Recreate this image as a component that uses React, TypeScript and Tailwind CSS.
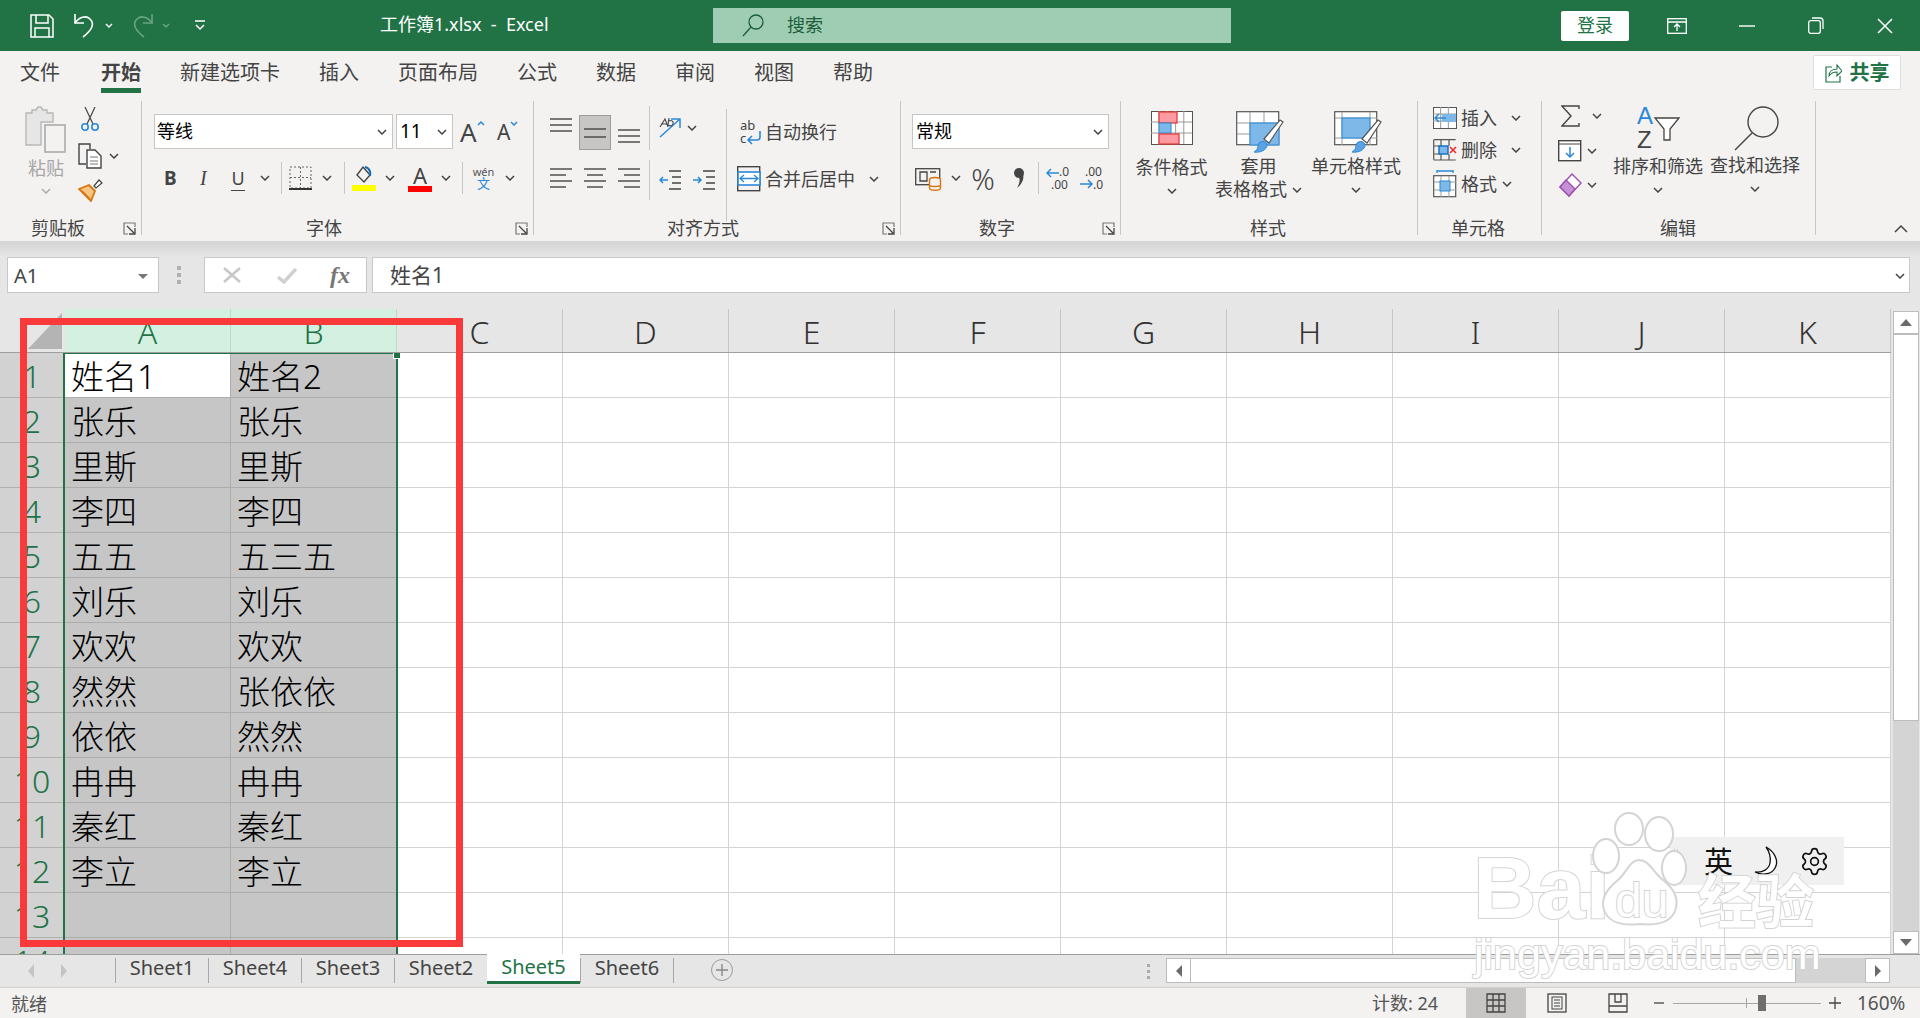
import type { ReactNode } from "react"
import { Settings } from "lucide-react"

type SvgProps = { w: number; h: number; children: ReactNode; className?: string }

function Svg({ w, h, children, className }: SvgProps) {
  return (
    <svg width={w} height={h} viewBox={`0 0 ${w} ${h}`} fill="none" className={`shrink-0 ${className ?? ""}`}>
      {children}
    </svg>
  )
}

function Chev({ className = "" }: { className?: string }) {
  return (
    <Svg w={10} h={6} className={className}>
      <path d="M1 1l4 4 4-4" stroke="#444" strokeWidth="1.5" />
    </Svg>
  )
}

function Launcher() {
  return (
    <Svg w={13} h={13} className="ml-auto mr-[5px] mt-[1px]">
      <path d="M12 5V1H1v11h4" stroke="#777" strokeWidth="1.2" />
      <path d="M4 4l7 7M6 12h6V6" stroke="#444" strokeWidth="1.3" />
    </Svg>
  )
}

function Lines({ widths, gap = 6, align = "left" }: { widths: number[]; gap?: number; align?: "left" | "center" | "right" }) {
  return (
    <Svg w={22} h={(widths.length - 1) * gap + 2}>
      {widths.map((w, i) => {
        const x = align === "left" ? 0 : align === "center" ? (22 - w) / 2 : 22 - w
        return <path key={i} d={`M${x} ${i * gap + 1}h${w}`} stroke="#444" strokeWidth="1.4" />
      })}
    </Svg>
  )
}

function Sep({ className = "" }: { className?: string }) {
  return <div className={`w-px bg-[#c8c6c4] ${className}`} />
}

function GridIcon({ w, h, cols, rows, children }: { w: number; h: number; cols: number; rows: number; children?: ReactNode }) {
  const xs = Array.from({ length: cols - 1 }, (_, i) => ((i + 1) * w) / cols)
  const ys = Array.from({ length: rows - 1 }, (_, i) => ((i + 1) * h) / rows)
  return (
    <Svg w={w + 1} h={h + 1}>
      <rect x=".5" y=".5" width={w} height={h} fill="#fff" stroke="#555" />
      {xs.map((x) => (
        <path key={x} d={`M${x} 0v${h}`} stroke="#999" />
      ))}
      {ys.map((y) => (
        <path key={y} d={`M0 ${y}h${w}`} stroke="#999" />
      ))}
      {children}
    </Svg>
  )
}

function TitleBar() {
  return (
    <div className="flex h-[51px] items-center bg-[#217346] pl-[30px] text-white">
      <Svg w={24} h={24}>
        <path d="M1 1h18l4 4v18H1z" stroke="#fff" strokeWidth="1.5" />
        <path d="M6 1v8h12V1M5 23v-9h14v9" stroke="#fff" strokeWidth="1.5" />
      </Svg>
      <Svg w={24} h={25} className="ml-[19px]">
        <path d="M2 1v9h9" stroke="#fff" strokeWidth="1.6" />
        <path d="M2 10c4-6 11-8 15-4 5 5 2 11-7 18" stroke="#fff" strokeWidth="1.6" />
      </Svg>
      <Svg w={8} h={6} className="ml-[8px]">
        <path d="M1 1l3 3 3-3" stroke="#fff" strokeWidth="1.4" />
      </Svg>
      <Svg w={24} h={25} className="ml-[17px]">
        <path d="M22 1v9h-9" stroke="#68a582" strokeWidth="1.6" />
        <path d="M22 10c-4-6-11-8-15-4-5 5-2 11 7 18" stroke="#68a582" strokeWidth="1.6" />
      </Svg>
      <Svg w={8} h={6} className="ml-[8px]">
        <path d="M1 1l3 3 3-3" stroke="#68a582" strokeWidth="1.4" />
      </Svg>
      <Svg w={10} h={11} className="ml-[25px]">
        <path d="M0 1h10M1 5l4 4 4-4" stroke="#fff" strokeWidth="1.5" />
      </Svg>
      <div className="mb-[2px] ml-[175px] w-[171px] whitespace-pre text-[18px]">工作簿1.xlsx  -  Excel</div>
      <div className="ml-[162px] flex h-[35px] w-[518px] items-center bg-[#9fcdb3] pl-[29px] text-[18px] text-[#1b5e38]">
        <Svg w={22} h={23}>
          <circle cx="14" cy="8" r="7" stroke="#1b5e38" strokeWidth="1.3" />
          <path d="M9 13L1 22" stroke="#1b5e38" strokeWidth="1.3" />
        </Svg>
        <span className="ml-[23px]">搜索</span>
      </div>
      <div className="ml-[330px] flex h-[30px] w-[68px] items-center justify-center rounded-[2px] bg-white text-[18px] text-[#217346]">登录</div>
      <Svg w={20} h={16} className="ml-[38px]">
        <rect x=".7" y=".7" width="18.6" height="14.6" stroke="#fff" strokeWidth="1.3" />
        <path d="M1 4h18M10 13V7M7 9l3-3 3 3" stroke="#fff" strokeWidth="1.3" />
      </Svg>
      <Svg w={16} h={2} className="ml-[52px]">
        <path d="M0 1h16" stroke="#fff" strokeWidth="1.4" />
      </Svg>
      <Svg w={16} h={17} className="ml-[53px]">
        <rect x=".7" y="3.7" width="11.6" height="12.6" rx="2" stroke="#fff" strokeWidth="1.3" />
        <path d="M4 1h8a3 3 0 013 3v8" stroke="#fff" strokeWidth="1.3" />
      </Svg>
      <Svg w={16} h={16} className="ml-[53px]">
        <path d="M1 1l14 14M15 1L1 15" stroke="#fff" strokeWidth="1.5" />
      </Svg>
    </div>
  )
}

const tabs = ["文件", "开始", "新建选项卡", "插入", "页面布局", "公式", "数据", "审阅", "视图", "帮助"]

function RibbonTabs() {
  return (
    <div className="flex h-[50px] items-start pl-[20px] text-[20px] text-[#444]">
      <div className="flex gap-[39px]">
        {tabs.map((t) =>
          t === "开始" ? (
            <div key={t} className="ml-[2px] h-[42px] border-b-[5px] border-[#217346] pt-[8px] font-bold leading-[28px] text-[#444]">
              {t}
            </div>
          ) : (
            <div key={t} className="h-[42px] pt-[8px] leading-[28px]">
              {t}
            </div>
          ),
        )}
      </div>
      <div className="ml-auto mr-[19px] mt-[4px] flex h-[35px] w-[88px] items-center justify-center gap-[8px] rounded-[2px] border border-[#e1dfdd] bg-white text-[20px] font-bold text-[#217346]">
        <Svg w={17} h={20}>
          <path d="M7 4H1v15h14v-6" stroke="#217346" strokeWidth="1.2" />
          <path d="M4 13c0-5 4-7 8-7V2l5 6-5 5V9c-3 0-6 1-8 4z" stroke="#217346" strokeWidth="1.1" />
        </Svg>
        共享
      </div>
    </div>
  )
}

function GroupLabel({ label, pl, launcher }: { label: string; pl: number; launcher?: boolean }) {
  return (
    <div className="flex h-[22px] items-center text-[18px] leading-[22px] text-[#444]" style={{ paddingLeft: pl }}>
      {label}
      {launcher && <Launcher />}
    </div>
  )
}

function ClipboardGroup() {
  return (
    <div className="h-[134px] w-[142px] shrink-0 border-r border-[#c8c6c4]">
      <div className="flex h-[116px] pl-[25px] pt-[5px]">
        <div className="flex w-[42px] flex-col items-center">
          <Svg w={42} h={47}>
            <path d="M1 7h6V4h4l2-3h3l2 3h4v3h6v9H16v23H1z" fill="#e6e6e6" stroke="#b8b8b8" strokeWidth="1.4" />
            <rect x="20" y="19" width="20" height="27" fill="#f3f2f1" stroke="#aaa" strokeWidth="1.6" />
          </Svg>
          <div className="mt-[3px] text-[18px] leading-[24px] text-[#a6a6a6]">粘贴</div>
          <Svg w={10} h={6} className="mt-[8px]">
            <path d="M1 1l4 4 4-4" stroke="#aaa" strokeWidth="1.5" />
          </Svg>
        </div>
        <div className="ml-[11px] flex flex-col pt-[1px]">
          <Svg w={20} h={25} className="ml-[2px]">
            <path d="M5 0l8 17M15 0L7 17" stroke="#444" strokeWidth="1.2" />
            <circle cx="5" cy="20" r="3.2" stroke="#2b88d8" strokeWidth="1.6" />
            <circle cx="15" cy="20" r="3.2" stroke="#2b88d8" strokeWidth="1.6" />
          </Svg>
          <div className="mt-[11px] flex items-center">
            <Svg w={24} h={26}>
              <path d="M8 21H1V1h11v5" stroke="#444" strokeWidth="1.4" />
              <path d="M9 7h8l6 6v12H9z" fill="#fff" stroke="#444" strokeWidth="1.4" />
              <path d="M12 14h8M12 18h8M12 21h8" stroke="#777" />
            </Svg>
            <Chev className="ml-[7px]" />
          </div>
          <Svg w={25} h={24} className="mt-[9px]">
            <path d="M16 8l5-6 3 3-6 5z" fill="#fff" stroke="#444" strokeWidth="1.2" />
            <path d="M1 11l10-4 6 6-4 10z" fill="#f6c483" stroke="#d9730d" strokeWidth="1.8" />
            <path d="M4 13l8 8" stroke="#d9730d" strokeWidth="1.3" />
          </Svg>
        </div>
      </div>
      <GroupLabel label="剪贴板" pl={31} launcher />
    </div>
  )
}

function FontGroup() {
  return (
    <div className="h-[134px] w-[392px] shrink-0 border-r border-[#c8c6c4]">
      <div className="h-[116px] pl-[12px] pt-[13px]">
        <div className="flex items-center">
          <div className="flex h-[35px] w-[239px] items-center border border-[#c8c6c4] bg-white pl-[2px] pr-[5px] text-[18px] text-black">
            等线
            <Chev className="ml-auto" />
          </div>
          <div className="ml-[3px] flex h-[35px] w-[57px] items-center border border-[#c8c6c4] bg-white pl-[3px] pr-[5px] text-[19px] text-black">
            11
            <Chev className="ml-auto" />
          </div>
          <div className="relative ml-[7px] flex w-[24px] text-[26px] leading-[32px] text-[#444]">
            A
            <Svg w={8} h={5} className="mt-[5px]">
              <path d="M1 4l3-3 3 3" stroke="#2b88d8" strokeWidth="1.5" />
            </Svg>
          </div>
          <div className="ml-[13px] flex w-[22px] text-[21px] leading-[32px] text-[#444]">
            A
            <Svg w={8} h={5} className="mt-[5px]">
              <path d="M1 1l3 3 3-3" stroke="#2b88d8" strokeWidth="1.5" />
            </Svg>
          </div>
        </div>
        <div className="mt-[11px] flex h-[36px] items-center text-[#444]">
          <span className="ml-[10px] w-[13px] text-[19px] font-bold">B</span>
          <span className="ml-[23px] w-[11px] font-['Liberation_Serif',serif] text-[20px] italic">I</span>
          <span className="ml-[20px] w-[14px] border-b border-[#444] text-center text-[18px] leading-[24px]">U</span>
          <Chev className="ml-[15px]" />
          <Sep className="ml-[11px] h-[32px]" />
          <Svg w={23} h={24} className="ml-[7px]">
            <path d="M1 1h21v21H1zM11.5 1v21M1 11.5h21" stroke="#666" strokeDasharray="2 2" />
            <path d="M0 23h23" stroke="#333" strokeWidth="2" />
          </Svg>
          <Chev className="ml-[10px]" />
          <Sep className="ml-[12px] h-[32px]" />
          <Svg w={24} h={26} className="ml-[7px]">
            <path d="M11 2l7 8-6 7-7-7z" stroke="#444" strokeWidth="1.4" />
            <path d="M13 2c5 1 6 6 5 9" stroke="#106ebe" strokeWidth="2" />
            <rect y="20" width="24" height="6" fill="#ffff00" />
          </Svg>
          <Chev className="ml-[9px]" />
          <div className="ml-[13px] flex w-[24px] flex-col items-center">
            <span className="text-[22px] leading-[20px] text-[#444]">A</span>
            <div className="mt-[1px] h-[6px] w-[24px] bg-[#ff0000]" />
          </div>
          <Chev className="ml-[9px]" />
          <Sep className="ml-[11px] h-[32px]" />
          <div className="ml-[9px] flex w-[23px] flex-col items-center text-center">
            <span className="text-[11px] leading-[11px] text-[#555]">wén</span>
            <span className="text-[13px] leading-[13px] text-[#2b88d8]">文</span>
          </div>
          <Chev className="ml-[10px]" />
        </div>
      </div>
      <GroupLabel label="字体" pl={164} launcher />
    </div>
  )
}

function AlignGroup() {
  return (
    <div className="h-[134px] w-[367px] shrink-0 border-r border-[#c8c6c4]">
      <div className="flex h-[116px] pl-[16px]">
        <div className="flex w-[99px] flex-col pt-[14px]">
          <div className="flex h-[35px] items-start">
            <div className="mt-[3px]">
              <Lines widths={[22, 22, 22]} />
            </div>
            <div className="ml-[7px] flex h-[35px] w-[32px] items-center justify-center border border-[#9c9c9c] bg-[#c8c6c4]">
              <Lines widths={[22, 22]} gap={8} />
            </div>
            <div className="ml-[7px] mt-[14px]">
              <Lines widths={[22, 22, 22]} />
            </div>
          </div>
          <div className="mt-[18px] flex gap-[12px]">
            <Lines widths={[22, 16, 22, 16]} align="left" gap={6} />
            <Lines widths={[22, 16, 22, 16]} align="center" gap={6} />
            <Lines widths={[22, 16, 22, 16]} align="right" gap={6} />
          </div>
        </div>
        <div className="flex w-[77px] flex-col">
          <div className="flex h-[46px] items-center pt-[8px]">
            <Sep className="h-[44px]" />
            <span className="ml-[8px] w-[24px]">
              <Svg w={24} h={24}>
                <path d="M2 21L22 3M13 3h9v9" stroke="#2b88d8" strokeWidth="1.5" />
                <path d="M2 11l5-8 3 8M3 8h6M11 2l-1 7c3 2 6 0 5-3-1-2-3-2-5 0" stroke="#444" strokeWidth="1.1" />
              </Svg>
            </span>
            <Chev className="ml-[5px]" />
          </div>
          <div className="mt-[13px] flex h-[40px] items-center">
            <Sep className="h-[40px]" />
            <div className="ml-[9px]">
              <Svg w={22} h={22}>
                <path d="M10 2h12M13 8h9M13 14h9M10 20h12" stroke="#444" strokeWidth="1.4" />
                <path d="M9 11H1M4 8l-3 3 3 3" stroke="#2b88d8" strokeWidth="1.5" />
              </Svg>
            </div>
            <div className="ml-[12px]">
              <Svg w={22} h={22}>
                <path d="M10 2h12M13 8h9M13 14h9M10 20h12" stroke="#444" strokeWidth="1.4" />
                <path d="M0 11h8M5 8l3 3-3 3" stroke="#2b88d8" strokeWidth="1.5" />
              </Svg>
            </div>
          </div>
        </div>
        <div className="mt-[8px] flex h-[112px] flex-col border-l border-[#c8c6c4] pl-[10px]">
          <div className="flex h-[46px] items-center text-[18px] text-[#444]">
            <Svg w={24} h={26} className="ml-[3px]">
              <text x="0" y="11" fontSize="13" fill="#444">ab</text>
              <text x="0" y="24" fontSize="13" fill="#444">c</text>
              <path d="M20 12v6a3 3 0 01-3 3H9M12 17l-4 4 4 4" stroke="#2b88d8" strokeWidth="1.6" />
            </Svg>
            <span className="ml-[1px]">自动换行</span>
          </div>
          <div className="mt-[2px] flex h-[44px] items-center text-[18px] text-[#444]">
            <Svg w={24} h={26}>
              <rect x=".7" y=".7" width="22" height="24" stroke="#444" strokeWidth="1.4" />
              <rect x="1" y="6" width="22" height="13" fill="#fff" stroke="#2b88d8" strokeWidth="1.6" />
              <path d="M3 12.5h18M7 9l-4 3.5L7 16M17 9l4 3.5-4 3.5" stroke="#2b88d8" strokeWidth="1.3" />
            </Svg>
            <span className="ml-[4px]">合并后居中</span>
            <Chev className="ml-[14px]" />
          </div>
        </div>
      </div>
      <GroupLabel label="对齐方式" pl={133} launcher />
    </div>
  )
}

function NumberGroup() {
  return (
    <div className="h-[134px] w-[220px] shrink-0 border-r border-[#c8c6c4]">
      <div className="h-[116px] pl-[11px] pt-[13px]">
        <div className="flex h-[35px] w-[197px] items-center border border-[#c8c6c4] bg-white pl-[3px] pr-[5px] text-[18px] text-black">
          常规
          <Chev className="ml-auto" />
        </div>
        <div className="mt-[11px] flex h-[36px] items-center text-[#444]">
          <Svg w={28} h={26} className="ml-[3px]">
            <rect x=".7" y="3.7" width="24" height="16" stroke="#444" strokeWidth="1.3" />
            <path d="M5 7h7v9H5zM15 7h6" stroke="#444" strokeWidth="1.3" />
            <ellipse cx="20" cy="15" rx="5.5" ry="2.5" fill="#f3f2f1" stroke="#d9730d" strokeWidth="1.4" />
            <path d="M14.5 15v8c0 3 11 3 11 0v-8M14.5 20c0 2 11 2 11 0" fill="#f3f2f1" stroke="#d9730d" strokeWidth="1.4" />
          </Svg>
          <Chev className="ml-[8px]" />
          <span className="ml-[10px] w-[24px] text-center text-[29px] font-light leading-none">%</span>
          <Svg w={14} h={22} className="ml-[17px]">
            <circle cx="7" cy="6" r="5" fill="#444" />
            <path d="M8 3c5 3 5 12-3 18 3-5 3-8 2-11z" fill="#444" />
          </Svg>
          <Sep className="ml-[12px] h-[32px]" />
          <Svg w={24} h={24} className="ml-[7px]">
            <text x="13" y="10" fontSize="12" fill="#444">.0</text>
            <text x="5" y="23" fontSize="12" fill="#444">.00</text>
            <path d="M1 7h12M5 3L1 7l4 4" stroke="#2b88d8" strokeWidth="1.5" />
          </Svg>
          <Svg w={24} h={24} className="ml-[10px]">
            <text x="5" y="10" fontSize="12" fill="#444">.00</text>
            <text x="13" y="23" fontSize="12" fill="#444">.0</text>
            <path d="M0 18h12M8 14l4 4-4 4" stroke="#2b88d8" strokeWidth="1.5" />
          </Svg>
        </div>
      </div>
      <GroupLabel label="数字" pl={78} launcher />
    </div>
  )
}

function BigText({ lines, w, chev = true }: { lines: string[]; w: number; chev?: boolean }) {
  return (
    <div className="flex flex-col items-center text-[18px] leading-[23px] text-[#444]" style={{ width: w }}>
      {lines.map((l) => (
        <span key={l} className="whitespace-nowrap">
          {l}
        </span>
      ))}
      {chev && <Chev className="mt-[9px]" />}
    </div>
  )
}

function BrushOver() {
  return (
    <>
      <path d="M28 28L44 9l3 2-14 21z" fill="#fff" stroke="#555" strokeWidth="1.2" />
      <path d="M18 41c6 1 13-2 13-7 0-3-5-5-8-2-2 3 0 6-5 9z" fill="#5ba3e0" stroke="#2b88d8" />
    </>
  )
}

function StylesGroup() {
  return (
    <div className="h-[134px] w-[297px] shrink-0 border-r border-[#c8c6c4]">
      <div className="flex h-[116px] pt-[10px]">
        <div className="ml-[14px] flex w-[73px] flex-col items-center">
          <GridIcon w={41} h={33} cols={5} rows={3}>
            <rect x="8" y="1" width="18" height="11" fill="#ff9aa2" stroke="#e03c3c" strokeWidth="1.3" />
            <rect x="8" y="12" width="12" height="10" fill="#7db8e8" stroke="#2b88d8" />
            <rect x="8" y="23" width="20" height="10" fill="#ff9aa2" stroke="#e03c3c" strokeWidth="1.3" />
          </GridIcon>
          <div className="mt-[11px]">
            <BigText lines={["条件格式"]} w={73} />
          </div>
        </div>
        <div className="ml-[14px] flex w-[73px] flex-col items-center">
          <Svg w={48} h={42} className="ml-[2px]">
            <rect x=".7" y=".7" width="42" height="33" fill="#fff" stroke="#555" strokeWidth="1.2" />
            <path d="M14 1v33M28 1v33M1 12h42M1 23h42" stroke="#999" />
            <rect x="14" y="12" width="29" height="22" fill="#7db8e8" stroke="#2b88d8" />
            <BrushOver />
          </Svg>
          <div className="mt-[2px] flex flex-col items-center text-[18px] leading-[23px] text-[#444]">
            <span>套用</span>
            <span className="flex items-center whitespace-nowrap">
              表格格式
              <Chev className="ml-[5px]" />
            </span>
          </div>
        </div>
        <div className="ml-[16px] flex w-[90px] flex-col items-center">
          <Svg w={48} h={42} className="ml-[3px]">
            <rect x=".7" y=".7" width="42" height="33" fill="#fff" stroke="#555" strokeWidth="1.2" />
            <path d="M1 7h42M1 27h42M8 1v33M36 1v33" stroke="#999" />
            <rect x="8" y="7" width="28" height="20" fill="#7db8e8" stroke="#2b88d8" />
            <BrushOver />
          </Svg>
          <div className="mt-[2px]">
            <BigText lines={["单元格样式"]} w={90} />
          </div>
        </div>
      </div>
      <GroupLabel label="样式" pl={129} />
    </div>
  )
}

function CellsGroup() {
  return (
    <div className="h-[134px] w-[124px] shrink-0 border-r border-[#c8c6c4]">
      <div className="h-[116px] pl-[15px] pt-[5px]">
        <div className="flex h-[24px] items-center text-[18px] text-[#444]">
          <GridIcon w={23} h={21} cols={3} rows={3}>
            <rect x="9" y="7" width="14" height="8" fill="#7db8e8" />
            <path d="M13 11H2M6 7l-4 4 4 4" stroke="#2b88d8" strokeWidth="1.5" />
          </GridIcon>
          <span className="ml-[4px]">插入</span>
          <Chev className="ml-[14px]" />
        </div>
        <div className="mt-[8px] flex h-[24px] items-center text-[18px] text-[#444]">
          <Svg w={24} h={22}>
            <path d="M.7.7h22M.7 21h22M.7.7v20M8 1v6M16 1v6M8 15v6M16 15v6M1 7h6M1 15h6" stroke="#555" strokeWidth="1.2" />
            <rect x="6" y="7" width="9" height="8" fill="#7db8e8" stroke="#106ebe" strokeWidth="1.4" />
            <path d="M17 8l6 6M23 8l-6 6" stroke="#f03030" strokeWidth="1.7" />
          </Svg>
          <span className="ml-[4px]">删除</span>
          <Chev className="ml-[14px]" />
        </div>
        <div className="mt-[10px] flex h-[24px] items-center text-[18px] text-[#444]">
          <Svg w={24} h={28}>
            <path d="M4 1h16M4 0v3M20 0v3" stroke="#2b88d8" strokeWidth="1.3" />
            <rect x=".7" y="5.7" width="22" height="21" fill="#fff" stroke="#555" strokeWidth="1.2" />
            <path d="M8 6v21M16 6v21M1 12h22M1 20h22" stroke="#999" />
            <rect x="7" y="11" width="10" height="10" fill="#7db8e8" stroke="#2b88d8" />
          </Svg>
          <span className="ml-[4px]">格式</span>
          <Chev className="ml-[5px]" />
        </div>
      </div>
      <GroupLabel label="单元格" pl={33} />
    </div>
  )
}

function EditGroup() {
  return (
    <div className="h-[134px] w-[274px] shrink-0 border-r border-[#c8c6c4]">
      <div className="flex h-[116px]">
        <div className="ml-[16px] flex w-[48px] flex-col pt-[4px]">
          <div className="flex h-[22px] items-center">
            <Svg w={20} h={22} className="ml-[3px]">
              <path d="M18 4V1H1l9 10-9 10h17v-3" stroke="#444" strokeWidth="1.4" />
            </Svg>
            <Chev className="ml-[11px]" />
          </div>
          <div className="mt-[13px] flex h-[22px] items-center">
            <Svg w={24} h={22}>
              <rect x=".7" y=".7" width="22" height="20" fill="#fff" stroke="#444" strokeWidth="1.4" />
              <path d="M1 4h22" stroke="#444" />
              <path d="M12 7v10M8 13l4 4 4-4" stroke="#2b88d8" strokeWidth="1.5" />
            </Svg>
            <Chev className="ml-[5px]" />
          </div>
          <div className="mt-[11px] flex h-[24px] items-center">
            <Svg w={24} h={24}>
              <path d="M2 14L14 1l9 9-12 13z" fill="#fff" stroke="#9b4fb0" strokeWidth="1.4" />
              <path d="M2 14l6-7 9 9-6 7z" fill="#c890d4" stroke="#9b4fb0" strokeWidth="1.4" />
            </Svg>
            <Chev className="ml-[5px]" />
          </div>
        </div>
        <div className="ml-[7px] flex w-[90px] flex-col items-center pt-[3px]">
          <Svg w={44} h={44}>
            <text x="1" y="20" fontSize="24" fill="#2b88d8" fontFamily="Liberation Sans, sans-serif">A</text>
            <text x="1" y="44" fontSize="24" fill="#444" fontFamily="Liberation Sans, sans-serif">Z</text>
            <path d="M19 14h24l-9 11v11h-6V25z" fill="#fff" stroke="#444" strokeWidth="1.3" />
          </Svg>
          <div className="mt-[7px]">
            <BigText lines={["排序和筛选"]} w={90} />
          </div>
        </div>
        <div className="ml-[7px] flex w-[90px] flex-col items-center pt-[5px]">
          <Svg w={46} h={45} className="ml-[2px]">
            <circle cx="30" cy="16" r="15" stroke="#444" strokeWidth="1.4" />
            <path d="M19 27L2 44" stroke="#444" strokeWidth="1.4" />
          </Svg>
          <div className="mt-[3px]">
            <BigText lines={["查找和选择"]} w={90} />
          </div>
        </div>
      </div>
      <GroupLabel label="编辑" pl={118} />
    </div>
  )
}

function Ribbon() {
  return (
    <div className="h-[190px] bg-[#f3f2f1]">
      <RibbonTabs />
      <div className="flex h-[134px]">
        <ClipboardGroup />
        <FontGroup />
        <AlignGroup />
        <NumberGroup />
        <StylesGroup />
        <CellsGroup />
        <EditGroup />
        <div className="flex flex-1 items-end justify-end pb-[2px] pr-[12px]">
          <Svg w={14} h={9}>
            <path d="M1 8l6-6 6 6" stroke="#444" strokeWidth="1.5" />
          </Svg>
        </div>
      </div>
    </div>
  )
}

function FormulaBar() {
  return (
    <div className="bg-[#e6e6e6]">
      <div className="h-[16px] bg-gradient-to-b from-[#d4d4d4] to-[#e6e6e6]" />
      <div className="flex h-[36px] text-[#444]">
        <div className="ml-[7px] flex w-[152px] items-center border border-[#c8c8c8] bg-white pl-[6px] pt-[2px] text-[20px]">
          A1
          <div className="ml-auto mr-[10px] h-0 w-0 border-x-[5px] border-t-[5px] border-x-transparent border-t-[#777]" />
        </div>
        <div className="ml-[18px] flex w-[6px] flex-col justify-center gap-[3px]">
          <div className="h-[4px] w-[4px] bg-[#b0b0b0]" />
          <div className="h-[4px] w-[4px] bg-[#b0b0b0]" />
          <div className="h-[4px] w-[4px] bg-[#b0b0b0]" />
        </div>
        <div className="ml-[21px] flex w-[163px] items-center border border-[#c8c8c8] bg-white pl-[18px]">
          <Svg w={18} h={16}>
            <path d="M1 1l16 14M17 1L1 15" stroke="#c8c8c8" strokeWidth="2.6" />
          </Svg>
          <Svg w={20} h={17} className="ml-[36px]">
            <path d="M1 10l6 5L19 2" stroke="#d0d0d0" strokeWidth="3.4" />
          </Svg>
          <span className="ml-[33px] font-['Liberation_Serif',serif] text-[24px] font-bold italic text-[#777]">fx</span>
        </div>
        <div className="ml-[5px] flex w-[1538px] items-center border border-[#c8c8c8] bg-white pl-[17px] pt-[2px] text-[21px]">
          姓名1
          <Chev className="ml-auto mr-[4px]" />
        </div>
      </div>
      <div className="h-[16px]" />
    </div>
  )
}

const colLetters = ["A", "B", "C", "D", "E", "F", "G", "H", "I", "J", "K"]
const names: [string, string][] = [
  ["姓名1", "姓名2"],
  ["张乐", "张乐"],
  ["里斯", "里斯"],
  ["李四", "李四"],
  ["五五", "五三五"],
  ["刘乐", "刘乐"],
  ["欢欢", "欢欢"],
  ["然然", "张依依"],
  ["依依", "然然"],
  ["冉冉", "冉冉"],
  ["秦红", "秦红"],
  ["李立", "李立"],
  ["", ""],
  ["", ""],
]

function Sheet() {
  return (
    <div className="w-[1891px] shrink-0 bg-white">
      <div className="flex h-[44px] border-b border-[#9e9e9e] bg-[#e6e6e6] text-[32px] font-light leading-[46px] text-[#333]">
        <div className="relative w-[65px] shrink-0">
          <div className="absolute bottom-[3px] right-[3px] h-0 w-0 border-b-[36px] border-l-[34px] border-b-[#b4b4b4] border-l-transparent" />
        </div>
        {colLetters.map((c, i) => (
          <div
            key={c}
            className={`flex w-[166px] shrink-0 justify-center border-r ${
              i < 2 ? "border-[#bfd9c9] bg-[#d3f0e0] text-[#217346]" : "border-[#c6c6c6]"
            }`}
          >
            {c}
          </div>
        ))}
      </div>
      <div className="relative h-[601px] overflow-hidden">
        {names.map((row, r) => (
          <div key={r} className="flex h-[45px]">
            <div className="flex w-[65px] shrink-0 justify-center whitespace-nowrap border-b border-r border-[#b0b0b0] bg-[#d2d2d2] text-[32px] font-light leading-[46px] text-[#217346]">
              {r + 1}
            </div>
            {colLetters.map((c, i) => (
              <div
                key={c}
                className={`w-[166px] shrink-0 whitespace-nowrap border-b border-r pl-[6px] text-[33px] font-light leading-[47px] text-black ${
                  i > 1
                    ? "border-[#d4d4d4] bg-white"
                    : r === 0 && i === 0
                      ? "border-[#adadad] bg-white"
                      : "border-[#adadad] bg-[#c6c6c6]"
                }`}
              >
                {i < 2 ? row[i] : ""}
              </div>
            ))}
          </div>
        ))}
        <div className="absolute left-[63px] top-[-1px] h-[620px] w-[335px] border-2 border-[#217346]" />
        <div className="absolute left-[394px] top-[-1px] h-[6px] w-[6px] bg-[#217346] outline outline-1 outline-white" />
      </div>
    </div>
  )
}

function ScrollArrow({ up }: { up?: boolean }) {
  return (
    <div className="flex h-[23px] w-[26px] items-center justify-center border border-[#bdbdbd] bg-white">
      <div className={`h-0 w-0 border-x-[6px] border-x-transparent ${up ? "border-b-[7px] border-b-[#6a6a6a]" : "border-t-[7px] border-t-[#6a6a6a]"}`} />
    </div>
  )
}

function VScroll() {
  return (
    <div className="flex flex-1 flex-col items-center bg-[#e6e6e6] pt-[2px]">
      <ScrollArrow up />
      <div className="h-[388px] w-[26px] border border-[#bdbdbd] bg-white" />
      <div className="h-[210px] w-[26px] bg-[#d4d4d4]" />
      <ScrollArrow />
    </div>
  )
}

const sheets = ["Sheet1", "Sheet4", "Sheet3", "Sheet2", "Sheet5", "Sheet6"]

function TabBar() {
  return (
    <div className="flex h-[33px] border-t border-[#9e9e9e] bg-[#e6e6e6]">
      <div className="flex w-[115px] shrink-0 items-center pl-[28px]">
        <div className="h-0 w-0 border-y-[7px] border-r-[6px] border-y-transparent border-r-[#c4c4c4]" />
        <div className="ml-[27px] h-0 w-0 border-y-[7px] border-l-[6px] border-y-transparent border-l-[#c4c4c4]" />
      </div>
      {sheets.map((s) =>
        s === "Sheet5" ? (
          <div key={s} className="mt-[-1px] flex h-[30px] w-[93px] shrink-0 items-center justify-center border-b-[3px] border-[#217346] bg-white pb-[2px] text-[20px] leading-none text-[#217346]">
            {s}
          </div>
        ) : (
          <div key={s} className="mt-[3px] flex h-[25px] w-[93px] shrink-0 items-center justify-center border-l border-[#a8a8a8] pb-[5px] text-[20px] leading-none text-[#444]">
            {s}
          </div>
        ),
      )}
      <div className="mt-[3px] h-[25px] w-px bg-[#a8a8a8]" />
      <div className="ml-[37px] mt-[4px] flex h-[22px] w-[22px] items-center justify-center rounded-full border border-[#9c9c9c]">
        <Svg w={12} h={12}>
          <path d="M6 0v12M0 6h12" stroke="#888" strokeWidth="1.4" />
        </Svg>
      </div>
      <div className="ml-[414px] flex w-[4px] flex-col justify-center gap-[3px]">
        <div className="h-[3px] w-[3px] bg-[#aaa]" />
        <div className="h-[3px] w-[3px] bg-[#aaa]" />
        <div className="h-[3px] w-[3px] bg-[#aaa]" />
      </div>
      <div className="ml-[15px] mt-[3px] flex h-[25px]">
        <div className="flex w-[25px] items-center justify-center border border-[#bdbdbd] bg-white">
          <div className="h-0 w-0 border-y-[6px] border-r-[6px] border-y-transparent border-r-[#6a6a6a]" />
        </div>
        <div className="w-[605px] border-y border-r border-[#bdbdbd] bg-white" />
        <div className="w-[69px] bg-[#d4d4d4]" />
        <div className="flex w-[25px] items-center justify-center border border-[#bdbdbd] bg-white">
          <div className="h-0 w-0 border-y-[6px] border-l-[6px] border-y-transparent border-l-[#6a6a6a]" />
        </div>
      </div>
    </div>
  )
}

function StatusBar() {
  return (
    <div className="flex h-[31px] items-center border-t border-[#d0d0d0] bg-[#f3f2f1] text-[18px] text-[#555]">
      <span className="ml-[11px] pt-[2px]">就绪</span>
      <span className="ml-[1325px] w-[94px] whitespace-nowrap">计数: 24</span>
      <div className="flex h-[30px] w-[60px] items-center justify-center bg-[#c8c6c4]">
        <Svg w={20} h={20}>
          <path d="M1 1h18v18H1zM7 1v18M13 1v18M1 7h18M1 13h18" stroke="#444" strokeWidth="1.3" />
        </Svg>
      </div>
      <Svg w={20} h={20} className="ml-[21px]">
        <rect x="1" y="1" width="18" height="18" stroke="#444" strokeWidth="1.3" />
        <rect x="5" y="4" width="10" height="12" stroke="#444" />
        <path d="M7 7h6M7 10h6M7 13h6" stroke="#444" />
      </Svg>
      <Svg w={20} h={20} className="ml-[41px]">
        <path d="M1 1h18v18H1zM1 13h18M7 1v8h6V1" stroke="#444" strokeWidth="1.3" />
      </Svg>
      <Svg w={10} h={2} className="ml-[26px]">
        <path d="M0 1h10" stroke="#444" strokeWidth="1.3" />
      </Svg>
      <div className="relative ml-[9px] flex h-[16px] w-[148px] items-center">
        <div className="h-px w-full bg-[#a6a6a6]" />
        <div className="absolute left-[73px] h-[10px] w-px bg-[#a6a6a6]" />
        <div className="absolute left-[85px] h-[16px] w-[8px] bg-[#6e6e6e]" />
      </div>
      <Svg w={12} h={12} className="ml-[8px]">
        <path d="M0 6h12M6 0v12" stroke="#444" strokeWidth="1.3" />
      </Svg>
      <span className="ml-[16px] whitespace-nowrap text-[19px]">160%</span>
    </div>
  )
}

// stuff that lies over the sheet
function RedFrame() {
  return <div className="absolute left-[20px] top-[318px] h-[629px] w-[443px] border-[7px] border-[#fa3a3a]" />
}

function ImeBar() {
  return (
    <div className="absolute left-[1670px] top-[837px] flex h-[48px] w-[174px] items-center bg-[#f0f0f0] text-[#111]">
      <div className="ml-[4px] h-[24px] w-[4px] border-x border-[#cfcfcf]" />
      <span className="ml-[26px] text-[29px] leading-none">英</span>
      <Svg w={28} h={30} className="ml-[19px]">
        <path d="M14 1c9 5 13 14 9 21-3 6-12 8-20 4 8 1 14-3 15-9 1-6-1-12-4-16z" fill="#fff" stroke="#111" strokeWidth="1.3" />
      </Svg>
      <Settings size={31} strokeWidth={1.3} className="ml-[19px]" />
    </div>
  )
}

function Watermark() {
  const textCls = "absolute font-bold text-white [-webkit-text-stroke:2px_#d4d4d4] [paint-order:stroke_fill]"
  return (
    <div className="pointer-events-none absolute left-[1470px] top-[810px] h-[170px] w-[352px] font-['Liberation_Sans',sans-serif]">
      <div className={`${textCls} left-[3px] top-[33px] text-[88px] leading-[90px]`}>Bai</div>
      <svg width="100" height="116" viewBox="0 0 100 116" className="absolute left-[122px] top-[2px]">
        <g fill="#fff" stroke="#d4d4d4" strokeWidth="2">
          <ellipse cx="37" cy="17" rx="14" ry="16" />
          <ellipse cx="67" cy="22" rx="14" ry="17" />
          <ellipse cx="14" cy="44" rx="13" ry="17" />
          <ellipse cx="82" cy="56" rx="12" ry="17" />
          <path d="M47 48c10 0 14 12 24 20 10 8 17 18 12 31-4 10-15 15-35 13-18 2-32-2-36-14-4-12 4-22 14-30 9-8 12-20 21-20z" />
        </g>
      </svg>
      <div className={`${textCls} left-[145px] top-[66px] text-[48px] font-normal leading-[50px]`}>du</div>
      <div className={`${textCls} left-[228px] top-[56px] font-['Noto_Sans_CJK_SC',sans-serif] text-[58px] leading-[64px]`}>经验</div>
      <div className={`${textCls} left-[4px] top-[118px] whitespace-nowrap text-[43px] font-normal leading-[52px]`}>jingyan.baidu.com</div>
    </div>
  )
}

export default function App() {
  return (
    <div className="relative h-[1018px] w-[1920px] overflow-hidden bg-[#e6e6e6] font-['Noto_Sans','Noto_Sans_CJK_SC',sans-serif]">
      <TitleBar />
      <Ribbon />
      <FormulaBar />
      <div className="flex h-[645px]">
        <Sheet />
        <VScroll />
      </div>
      <TabBar />
      <StatusBar />
      <RedFrame />
      <ImeBar />
      <Watermark />
    </div>
  )
}
